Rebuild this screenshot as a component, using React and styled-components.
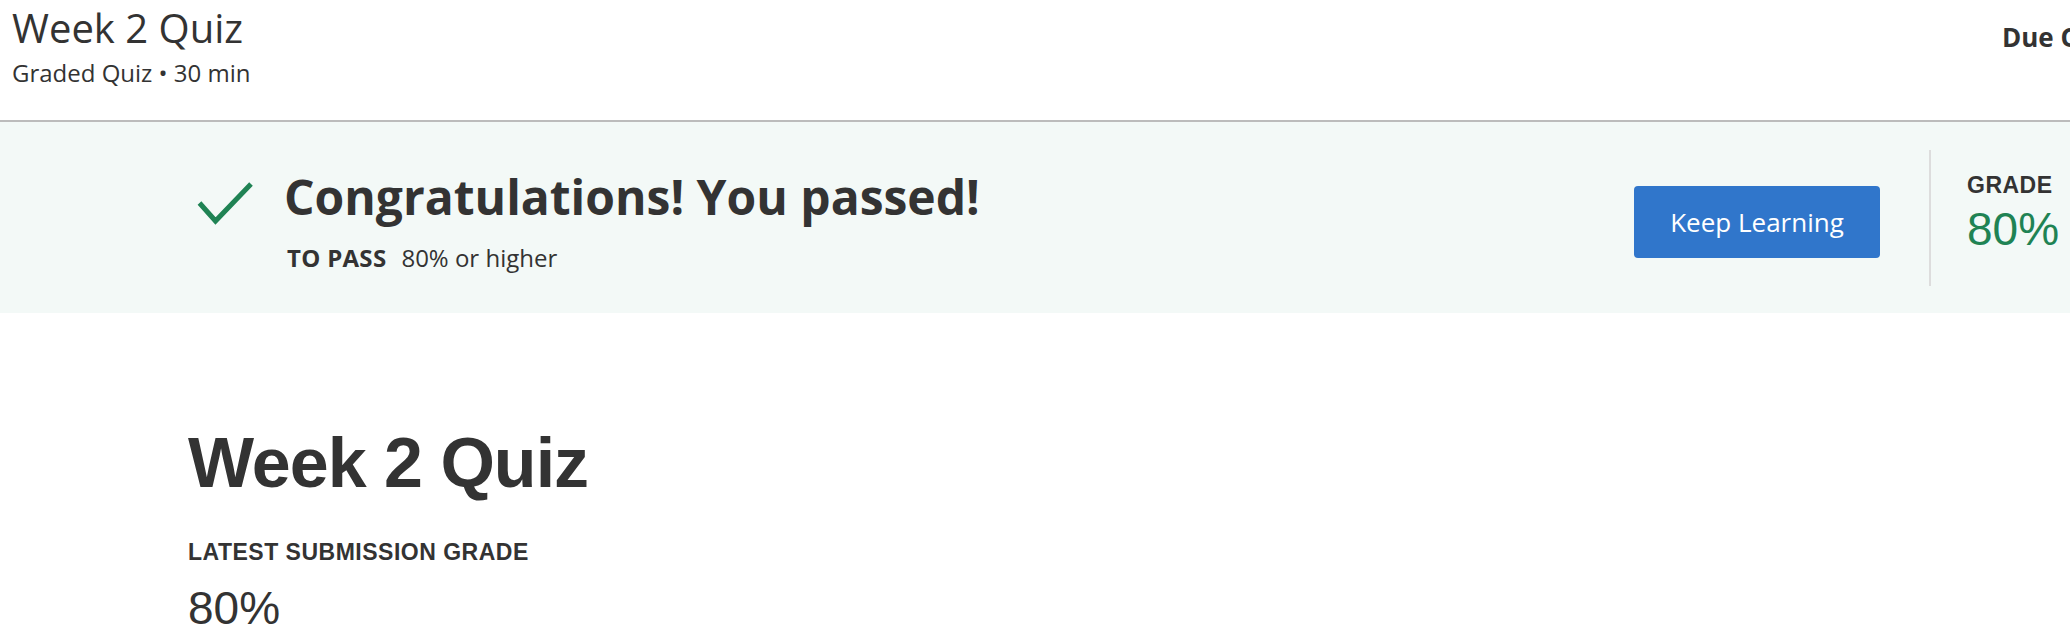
import React from "react";
import styled, { createGlobalStyle } from "styled-components";

const GlobalStyle = createGlobalStyle`
  html, body {
    margin: 0;
    padding: 0;
    background: #ffffff;
    overflow: hidden;
  }
  body {
    font-family: "Open Sans", "Liberation Sans", sans-serif;
    color: #333333;
  }
  * { box-sizing: border-box; }
`;

const Page = styled.div`
  width: 2070px;
  height: 640px;
  overflow: hidden;
  display: flex;
  flex-direction: column;
`;

const Header = styled.header`
  height: 122px;
  flex: 0 0 auto;
  display: flex;
  justify-content: space-between;
  align-items: flex-start;
  padding-left: 12px;
  border-bottom: 2px solid #bcbcbc;
`;

const TitleBlock = styled.div`
  display: flex;
  flex-direction: column;
  padding-top: 4px;
`;

const PageTitle = styled.h1`
  margin: 0;
  font-family: "Open Sans", sans-serif;
  font-weight: 400;
  font-size: 40px;
  line-height: 48px;
  color: #333333;
`;

const Subtitle = styled.div`
  margin-top: 6px;
  font-family: "Open Sans", sans-serif;
  font-size: 24px;
  line-height: 30px;
  color: #333333;
`;

const Due = styled.div`
  flex: 0 0 68px;
  width: 68px;
  white-space: nowrap;
  padding-top: 20px;
  font-family: "Open Sans", sans-serif;
  font-weight: 700;
  font-size: 26px;
  line-height: 34px;
  color: #333333;
`;

const Banner = styled.section`
  flex: 0 0 191px;
  background: #f3f9f7;
  display: flex;
  align-items: center;
  padding-left: 197px;
`;

const Summary = styled.div`
  display: flex;
  align-items: flex-start;
  padding-top: 4px;
`;

const CheckIcon = styled.svg`
  flex: 0 0 auto;
  width: 56px;
  height: 44px;
  margin-top: 14px;
  margin-right: 31px;
`;

const Message = styled.div`
  display: flex;
  flex-direction: column;
`;

const Headline = styled.h2`
  margin: 0;
  font-family: "Open Sans", sans-serif;
  font-weight: 700;
  font-size: 48px;
  line-height: 60px;
  color: #333333;
`;

const PassLine = styled.div`
  margin-top: 16px;
  padding-left: 3px;
  font-family: "Open Sans", sans-serif;
  font-size: 24px;
  line-height: 30px;
  color: #333333;
`;

const PassLabel = styled.span`
  font-weight: 700;
  letter-spacing: 0.3px;
  margin-right: 15px;
`;

const Actions = styled.div`
  margin-left: auto;
  display: flex;
  align-items: center;
`;

const PrimaryButton = styled.button`
  width: 246px;
  height: 72px;
  margin-top: 9px;
  border: none;
  border-radius: 4px;
  background: #3076cb;
  color: #ffffff;
  font-family: "Open Sans", sans-serif;
  font-size: 26px;
  font-weight: 400;
  cursor: pointer;
`;

const VDivider = styled.div`
  width: 2px;
  height: 136px;
  background: #dddddd;
  margin: 0 36px 0 49px;
`;

const GradeBox = styled.div`
  width: 103px;
  display: flex;
  flex-direction: column;
  padding-bottom: 8px;
`;

const Overline = styled.div`
  font-family: "Liberation Sans", Arial, sans-serif;
  font-weight: 700;
  font-size: 23px;
  line-height: 26px;
  letter-spacing: 0.5px;
  text-transform: uppercase;
  color: #333333;
  white-space: nowrap;
`;

const GradeValue = styled.div`
  margin-top: ${(p) => p.$gap || 0}px;
  font-family: "Liberation Sans", Arial, sans-serif;
  font-size: 46px;
  line-height: 52px;
  color: ${(p) => p.$color || "#333333"};
`;

const Main = styled.main`
  padding: 115px 0 0 188px;
  display: flex;
  flex-direction: column;
`;

const QuizHeading = styled.h1`
  margin: 0 0 41px;
  font-family: "Liberation Sans", Arial, sans-serif;
  font-weight: 700;
  font-size: 70px;
  line-height: 70px;
  letter-spacing: -1px;
  color: #333333;
`;

export default function App() {
  return (
    <>
      <GlobalStyle />
      <Page>
        <Header>
          <TitleBlock>
            <PageTitle>Week 2 Quiz</PageTitle>
            <Subtitle>Graded Quiz • 30 min</Subtitle>
          </TitleBlock>
          <Due>Due Oct 12, 11:59 PM PDT</Due>
        </Header>

        <Banner>
          <Summary>
            <CheckIcon viewBox="0 0 56 44" aria-hidden="true">
              <path
                d="M2.5 22 L18.5 40 L54 3"
                fill="none"
                stroke="#1f8354"
                strokeWidth="5"
              />
            </CheckIcon>
            <Message>
              <Headline>Congratulations! You passed!</Headline>
              <PassLine>
                <PassLabel>TO PASS</PassLabel>80% or higher
              </PassLine>
            </Message>
          </Summary>

          <Actions>
            <PrimaryButton>Keep Learning</PrimaryButton>
            <VDivider />
            <GradeBox>
              <Overline>Grade</Overline>
              <GradeValue $gap={5} $color="#1f8354">80%</GradeValue>
            </GradeBox>
          </Actions>
        </Banner>

        <Main>
          <QuizHeading>Week 2 Quiz</QuizHeading>
          <Overline>Latest Submission Grade</Overline>
          <GradeValue $gap={17}>80%</GradeValue>
        </Main>
      </Page>
    </>
  );
}
